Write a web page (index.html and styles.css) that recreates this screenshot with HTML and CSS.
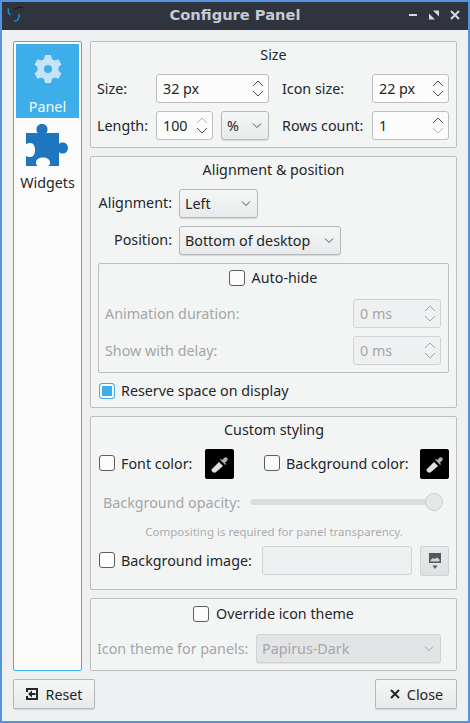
FILE: index.html
```html
<!DOCTYPE html>
<html lang="en">
<head>
    <meta charset="UTF-8">
    <meta name="viewport" content="width=device-width, initial-scale=1.0">
    <title>Configure Panel</title>
    <link rel="stylesheet" href="styles.css">
</head>
<body>
    <div class="window">
        <div class="titlebar">
            <svg class="app-icon" width="20" height="18" viewBox="0 0 20 18"><path d="M2.500 1.500C1.800 4 2.500 6.500 4.500 8" fill="none" stroke="#1a8fd0" stroke-width="1.500"/><path d="M8 14c3 .5 6-2 5-7" fill="none" stroke="#1a8fd0" stroke-width="1.500"/><path d="M8 2c3-1.500 6-1.500 9-1.500" fill="none" stroke="#14171c" stroke-width="1.200"/></svg>
            <div class="title">Configure Panel</div>
            <div class="win-buttons">
                <svg width="12" height="12" viewBox="0 0 12 12"><path d="M2 6h8" stroke="#d3dae3" stroke-width="2"/></svg>
                <svg width="12" height="12" viewBox="0 0 12 12"><path d="M5 1.500h6v6zM1 4.500l6 6H1z" fill="#d3dae3"/></svg>
                <svg width="12" height="12" viewBox="0 0 12 12"><path d="M2 2l8 8M10 2l-8 8" stroke="#d3dae3" stroke-width="2"/></svg>
            </div>
        </div>
        <div class="content">
            <div class="main">
                <div class="sidebar">
                    <div class="side-item active">
                        <svg width="32" height="32" viewBox="0 0 32 32"><path fill-rule="evenodd" fill="#c5e3f7" d="M13 2h6l1 4 2.500 1.400 4-1.200 3 5.200-3 2.900v3.400l3 2.900-3 5.200-4-1.200L20 26l-1 4h-6l-1-4-2.500-1.400-4 1.200-3-5.200 3-2.900v-3.400l-3-2.900 3-5.200 4 1.200L12 6zM16 12a4 4 0 1 0 0 8 4 4 0 0 0 0-8z"/></svg>
                        <span>Panel</span>
                    </div>
                    <div class="side-item">
                        <svg class="puzzle" width="42" height="42" viewBox="0 0 42 42"><path fill="#2075bf" d="M0 9h12c-1.500-1-1.500-2-1.500-4 0-3 2.500-5 5.500-5s5.500 2 5.500 5c0 2 0 3-1.500 4H33v11c1-1.500 2-1.500 4-1.500 3 0 5 2.500 5 5.500s-2 5.500-5 5.500c-2 0-3 0-4-1.500V42H22c2-1 2-2 2-3.500 0-3-3-5-7-5s-7 2-7 5c0 1.500 0 2.500 2 3.500H0V32c2 1 3 1 4.500 1 3 0 4.500-3 4.500-7s-1.500-7-4.500-7c-1.500 0-2.500 0-4.500 1z"/></svg>
                        <span>Widgets</span>
                    </div>
                </div>
                <div class="groups">
                    <section class="group group-size">
                        <h2>Size</h2>
                        <div class="size-grid">
                            <label>Size:</label>
                            <div class="spin spin-wide"><span>32 px</span><i class="arrows"><svg width="14" height="24" viewBox="0 0 14 24"><path d="M2 9l5-5 5 5M2 14l5 5 5-5" fill="none" stroke="#4d5257"/></svg></i></div>
                            <label class="col-label">Icon size:</label>
                            <div class="spin spin-right"><span>22 px</span><i class="arrows"><svg width="14" height="24" viewBox="0 0 14 24"><path d="M2 9l5-5 5 5M2 14l5 5 5-5" fill="none" stroke="#4d5257"/></svg></i></div>
                            <label>Length:</label>
                            <div class="length-row">
                                <div class="spin spin-len"><span>100</span><i class="arrows"><svg width="14" height="24" viewBox="0 0 14 24"><path d="M2 9l5-5 5 5" fill="none" stroke="#b4b6b8"/><path d="M2 14l5 5 5-5" fill="none" stroke="#4d5257"/></svg></i></div>
                                <div class="combo combo-unit"><span>%</span><svg width="12" height="8" viewBox="0 0 12 8"><path d="M2 1.500l4 4 4-4" fill="none" stroke="#4d5257"/></svg></div>
                            </div>
                            <label class="col-label">Rows count:</label>
                            <div class="spin spin-right"><span>1</span><i class="arrows"><svg width="14" height="24" viewBox="0 0 14 24"><path d="M2 9l5-5 5 5" fill="none" stroke="#4d5257"/><path d="M2 14l5 5 5-5" fill="none" stroke="#b4b6b8"/></svg></i></div>
                        </div>
                    </section>

                    <section class="group group-align">
                        <h2>Alignment &amp; position</h2>
                        <div class="row align-row">
                            <label class="align-label">Alignment:</label>
                            <div class="combo combo-align"><span>Left</span><svg width="12" height="8" viewBox="0 0 12 8"><path d="M2 1.500l4 4 4-4" fill="none" stroke="#4d5257"/></svg></div>
                        </div>
                        <div class="row align-row">
                            <label class="align-label">Position:</label>
                            <div class="combo combo-pos"><span>Bottom of desktop</span><svg width="12" height="8" viewBox="0 0 12 8"><path d="M2 1.500l4 4 4-4" fill="none" stroke="#4d5257"/></svg></div>
                        </div>
                        <div class="subgroup">
                            <div class="check-title"><i class="check"></i><span>Auto-hide</span></div>
                            <div class="row sub-row disabled">
                                <label>Animation duration:</label>
                                <div class="spin spin-sub"><span>0 ms</span><i class="arrows"><svg width="14" height="24" viewBox="0 0 14 24"><path d="M2 9l5-5 5 5M2 14l5 5 5-5" fill="none" stroke="#a3a6a8"/></svg></i></div>
                            </div>
                            <div class="row sub-row disabled">
                                <label>Show with delay:</label>
                                <div class="spin spin-sub"><span>0 ms</span><i class="arrows"><svg width="14" height="24" viewBox="0 0 14 24"><path d="M2 9l5-5 5 5M2 14l5 5 5-5" fill="none" stroke="#a3a6a8"/></svg></i></div>
                            </div>
                        </div>
                        <div class="reserve"><i class="check checked"></i><span>Reserve space on display</span></div>
                    </section>

                    <section class="group group-style">
                        <h2>Custom styling</h2>
                        <div class="row color-row">
                            <i class="check"></i><label class="font-label">Font color:</label>
                            <div class="swatch"><svg width="20" height="20" viewBox="0 0 20 20"><path fill="#e0e0e0" d="M1.500 15.500L9 8l4 4-7.500 6.500c-1.500.5-4.500-.5-4-3z"/><path fill="#b0b0b0" d="M10 5.500l1-.5 1.500 1L14 4c1-1 2.500-1 3.200-.2s.8 2.200-.2 3.200l-2 1.500 1 1.500-.8 1z"/></svg></div>
                            <i class="check check-bg"></i><label class="bg-label">Background color:</label>
                            <div class="swatch"><svg width="20" height="20" viewBox="0 0 20 20"><path fill="#e0e0e0" d="M1.500 15.500L9 8l4 4-7.500 6.500c-1.500.5-4.500-.5-4-3z"/><path fill="#b0b0b0" d="M10 5.500l1-.5 1.500 1L14 4c1-1 2.500-1 3.200-.2s.8 2.200-.2 3.200l-2 1.500 1 1.500-.8 1z"/></svg></div>
                        </div>
                        <div class="row opacity-row disabled">
                            <label>Background opacity:</label>
                            <div class="slider"><div class="slider-knob"></div></div>
                        </div>
                        <p class="hint">Compositing is required for panel transparency.</p>
                        <div class="row image-row">
                            <i class="check"></i><label class="image-label">Background image:</label>
                            <div class="image-input"></div>
                            <div class="image-btn"><svg width="14" height="18" viewBox="0 0 14 18"><path fill="#53585c" d="M1 1h12v10H1z"/><path fill="#d5d6d7" d="M2.500 9.500V8L5 6l1.500 1L9 5.500l2.500 2v2z"/><path fill="#53585c" d="M4.500 13.500h5L7 17z"/></svg></div>
                        </div>
                    </section>

                    <section class="group group-icons">
                        <div class="check-title"><i class="check"></i><span>Override icon theme</span></div>
                        <div class="row theme-row disabled">
                            <label class="theme-label">Icon theme for panels:</label>
                            <div class="combo combo-theme"><span>Papirus-Dark</span><svg width="12" height="8" viewBox="0 0 12 8"><path d="M2 1.500l4 4 4-4" fill="none" stroke="#a3a6a8"/></svg></div>
                        </div>
                    </section>
                </div>
            </div>
            <div class="footer">
                <div class="button"><svg width="14" height="14" viewBox="0 0 14 14"><path d="M2 5V2h10v10H2V9" fill="none" stroke="#232629" stroke-width="2"/><path fill="#232629" d="M3 7l4-3.500V6h3.500v2H7v2.500z"/></svg><span>Reset</span></div>
                <div class="button"><svg width="12" height="12" viewBox="0 0 12 12"><path d="M2 2l8 8M10 2l-8 8" stroke="#232629" stroke-width="2"/></svg><span>Close</span></div>
            </div>
        </div>
    </div>
</body>
</html>
```

FILE: styles.css
```css
html, body {
    margin: 0;
    height: 100%;
}
body {
    font-family: "Noto Sans", sans-serif;
    font-size: 14.3px;
    color: #232629;
}
.window {
    width: 470px;
    height: 723px;
    box-sizing: border-box;
    border: 2px solid #5294e2;
    background: #eff0f1;
    display: flex;
    flex-direction: column;
}
.titlebar {
    height: 28px;
    background: #2f343f;
    display: flex;
    align-items: center;
    position: relative;
    flex: none;
}
.app-icon {
    margin-left: 4px;
}
.title {
    position: absolute;
    left: 0;
    right: 0;
    top: 4px;
    text-align: center;
    color: #c5cbd3;
    font-family: "DejaVu Sans", sans-serif;
    font-weight: bold;
    font-size: 14.67px;
    line-height: 18px;
}
.win-buttons {
    margin-left: auto;
    margin-right: 7px;
    margin-bottom: 2px;
    display: flex;
    gap: 9px;
}
.content {
    flex: 1;
    display: flex;
    flex-direction: column;
    padding: 11px 11px 12px;
    min-height: 0;
}
.main {
    flex: 1;
    display: flex;
    gap: 8px;
    min-height: 0;
}
.sidebar {
    width: 69px;
    box-sizing: border-box;
    background: #fcfcfc;
    border: 1px solid #3daee9;
    border-radius: 2px;
    padding: 2px;
    flex: none;
}
.side-item {
    height: 74px;
    display: flex;
    flex-direction: column;
    align-items: center;
    box-sizing: border-box;
    padding-top: 6px;
    gap: 7px;
}
.side-item.active {
    background: #3daee9;
    color: #fcfcfc;
    padding-top: 9px;
    gap: 12px;
}
.side-item span {
    line-height: 19px;
}
.puzzle {
    margin-right: 1px;
}
.groups {
    flex: 1;
    display: flex;
    flex-direction: column;
    gap: 8px;
    min-width: 0;
}
.group {
    background: #f3f5f5;
    border: 1px solid #bcbebf;
    border-radius: 2px;
    box-sizing: border-box;
    flex: none;
}
.group h2 {
    margin: 0;
    font-size: 14.3px;
    font-weight: normal;
    text-align: center;
    line-height: 19px;
}
.group-size { height: 107px; padding: 3px 6px 0; }
.group-align { height: 252px; padding: 3px 6px 0; }
.group-style { height: 174px; padding: 3px 7px 0 8px; }
.group-icons { height: 73px; padding: 3px 6px 0; }
label { white-space: nowrap; }
.row {
    display: flex;
    align-items: center;
}
.size-grid {
    display: grid;
    grid-template-columns: 59px 113px 103px 77px;
    grid-auto-rows: 29px;
    row-gap: 8px;
    margin-top: 10px;
    align-items: center;
}
.col-label { padding-left: 13px; }
.length-row {
    display: flex;
    gap: 8px;
}
.spin, .combo {
    box-sizing: border-box;
    height: 29px;
    border: 1px solid #bcbebf;
    border-radius: 3px;
    background: #fcfcfc;
    display: flex;
    align-items: center;
    justify-content: space-between;
    padding-left: 6px;
}
.arrows {
    display: flex;
    margin-right: 3px;
}
.spin-wide { width: 113px; }
.spin-right { width: 77px; }
.spin-len { width: 57px; }
.combo {
    background: linear-gradient(#f5f6f6, #e8e9ea);
    border-color: #b6b8b9;
    box-shadow: 0 1px 1px rgba(0, 0, 0, 0.12);
    padding-left: 5px;
    padding-right: 5px;
}
.combo-unit { width: 48px; }
.combo-align { width: 79px; }
.combo-pos { width: 162px; }
.align-row {
    margin-top: 10px;
    height: 29px;
}
.align-row + .align-row { margin-top: 8px; }
.align-label {
    width: 75px;
    margin-right: 7px;
    text-align: right;
    margin-bottom: 2px;
}
.subgroup {
    margin: 8px 1px 0;
    height: 110px;
    box-sizing: border-box;
    border: 1px solid #bcbebf;
    border-radius: 2px;
    padding: 3px 7px 0 6px;
}
.check-title {
    display: flex;
    justify-content: center;
    align-items: center;
    gap: 7px;
    line-height: 22px;
}
.group-icons .check-title { margin-top: 1px; }
.check {
    display: block;
    box-sizing: border-box;
    width: 16px;
    height: 16px;
    border: 1px solid #5b5e61;
    border-radius: 3px;
    background: #fcfcfc;
    flex: none;
}
.check.checked {
    border-color: #3daee9;
    background: #3daee9;
    box-shadow: inset 0 0 0 2px #fcfcfc;
}
.sub-row {
    justify-content: space-between;
    height: 29px;
    margin-top: 8px;
}
.check-title + .sub-row { margin-top: 10px; }
.disabled label { color: #a3a6a8; }
.spin-sub {
    width: 88px;
    background: #eff0f1;
    color: #a3a6a8;
    border-color: #d0d2d3;
}
.reserve {
    display: flex;
    align-items: center;
    gap: 6px;
    margin-top: 7px;
    margin-left: 2px;
    line-height: 22px;
}
.color-row {
    margin-top: 10px;
    height: 30px;
}
.color-row .check, .color-row label,
.image-row .check, .image-row label {
    margin-bottom: 2px;
}
.font-label { margin-left: 6px; width: 84px; }
.bg-label { margin-left: 6px; width: 134px; }
.color-row .check-bg { margin-left: 30px; }
.swatch {
    width: 29px;
    height: 30px;
    background: #000;
    border-radius: 2px;
    box-sizing: border-box;
    display: flex;
    align-items: center;
    justify-content: center;
    flex: none;
}
.opacity-row {
    margin-top: 11px;
    height: 24px;
    padding-left: 4px;
    padding-right: 6px;
}
.slider {
    flex: 1;
    margin-left: 10px;
    height: 6px;
    border-radius: 3px;
    background: #dcdddd;
    display: flex;
    align-items: center;
    justify-content: flex-end;
}
.slider-knob {
    width: 18px;
    height: 18px;
    box-sizing: border-box;
    border-radius: 50%;
    border: 1px solid #c9cbcc;
    background: #e6e7e8;
    flex: none;
}
.hint {
    margin: 10px 0 0;
    font-size: 11.5px;
    line-height: 16px;
    color: #a9acae;
    text-align: center;
}
.image-row {
    margin-top: 6px;
    height: 30px;
}
.image-label { margin-left: 6px; width: 141px; }
.image-input {
    box-sizing: border-box;
    width: 150px;
    height: 29px;
    align-self: flex-start;
    background: #eff0f1;
    border: 1px solid #d0d2d3;
    border-radius: 3px;
}
.image-btn {
    box-sizing: border-box;
    width: 29px;
    height: 30px;
    margin-left: 8px;
    background: linear-gradient(#e9eaeb, #dfe0e1);
    border: 1px solid #d0d2d3;
    border-radius: 2px;
    display: flex;
    align-items: center;
    justify-content: center;
}
.theme-row {
    margin-top: 9px;
    height: 29px;
    gap: 8px;
}
.theme-label { width: 151px; }
.combo-theme {
    width: 185px;
    background: #e3e4e5;
    color: #a3a6a8;
    border-color: #d0d2d3;
    box-shadow: 0 1px 1px rgba(0, 0, 0, 0.08);
}
.footer {
    display: flex;
    justify-content: space-between;
    margin-top: 8px;
    flex: none;
}
.button {
    box-sizing: border-box;
    width: 82px;
    height: 30px;
    display: flex;
    align-items: center;
    justify-content: center;
    gap: 6px;
    background: linear-gradient(#f5f6f6, #e8e9ea);
    border: 1px solid #b6b8b9;
    border-radius: 2px;
    box-shadow: 0 1px 1px rgba(0, 0, 0, 0.12);
}
```
